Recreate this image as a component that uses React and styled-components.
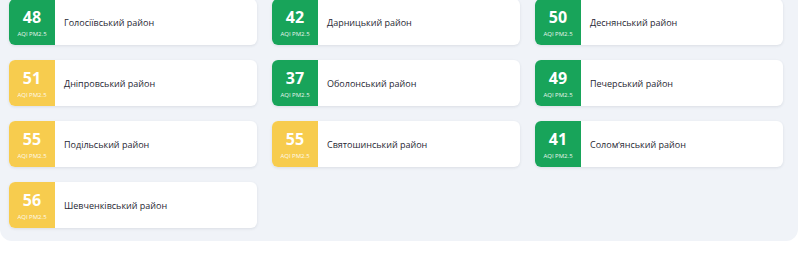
import React from 'react';
import styled, { createGlobalStyle } from 'styled-components';

const GlobalStyle = createGlobalStyle`
  html, body {
    margin: 0;
    padding: 0;
    background: #ffffff;
    font-family: "Open Sans", "Noto Sans", sans-serif;
  }
`;

const Panel = styled.div`
  width: 798px;
  box-sizing: border-box;
  margin-top: -1px;
  padding: 0 15px 13px 9px;
  background: #f0f3f8;
  border-radius: 0 0 12px 12px;
`;

const Grid = styled.div`
  display: grid;
  grid-template-columns: repeat(3, 248px);
  column-gap: 15px;
  row-gap: 15px;
`;

const Card = styled.div`
  display: flex;
  align-items: center;
  height: 46px;
  background: #ffffff;
  border-radius: 6px;
  box-shadow: 0 1px 3px rgba(30, 40, 60, 0.1);
  overflow: hidden;
`;

const Badge = styled.div`
  width: 46px;
  height: 46px;
  flex-shrink: 0;
  display: flex;
  flex-direction: column;
  align-items: center;
  justify-content: center;
  background: ${p => (p.$level === 'good' ? '#18a45a' : '#f7cc4e')};
  color: #ffffff;
`;

const Value = styled.div`
  font-size: 16px;
  font-weight: 700;
  line-height: 18px;
  margin-top: 1px;
`;

const Label = styled.div`
  font-size: 6px;
  line-height: 8px;
  margin-top: 4px;
  opacity: 0.9;
`;

const Name = styled.div`
  padding-left: 9px;
  font-size: 9px;
  color: #1f2733;
`;

const districts = [
  { aqi: 48, name: 'Голосіївський район' },
  { aqi: 42, name: 'Дарницький район' },
  { aqi: 50, name: 'Деснянський район' },
  { aqi: 51, name: 'Дніпровський район' },
  { aqi: 37, name: 'Оболонський район' },
  { aqi: 49, name: 'Печерський район' },
  { aqi: 55, name: 'Подільський район' },
  { aqi: 55, name: 'Святошинський район' },
  { aqi: 41, name: 'Солом\u02bcянський район' },
  { aqi: 56, name: 'Шевченківський район' },
];

export default function App() {
  return (
    <>
      <GlobalStyle />
      <Panel>
        <Grid>
          {districts.map(d => (
            <Card key={d.name}>
              <Badge $level={d.aqi <= 50 ? 'good' : 'moderate'}>
                <Value>{d.aqi}</Value>
                <Label>AQI PM2.5</Label>
              </Badge>
              <Name>{d.name}</Name>
            </Card>
          ))}
        </Grid>
      </Panel>
    </>
  );
}
